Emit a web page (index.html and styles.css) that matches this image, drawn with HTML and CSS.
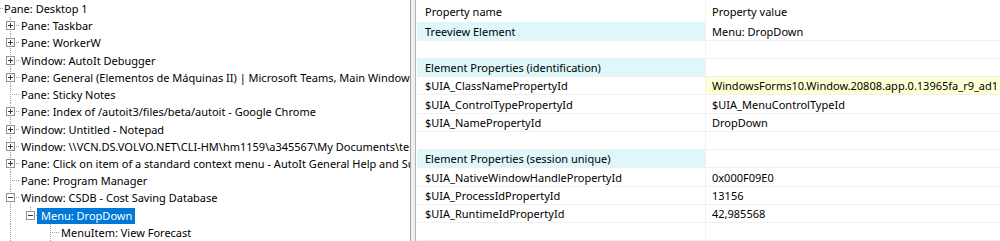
FILE: index.html
```html
<!DOCTYPE html>
<html>
<head>
<meta charset="utf-8">
<link rel="stylesheet" href="styles.css">
</head>
<body>
<div class="app">
  <div class="tree">
    <div class="row"><span class="stub"></span><span class="label">Pane: Desktop 1</span></div>
    <div class="row"><span class="g t"><i class="box plus"></i></span><span class="label">Pane: Taskbar</span></div>
    <div class="row"><span class="g t"><i class="box plus"></i></span><span class="label">Pane: WorkerW</span></div>
    <div class="row"><span class="g t"><i class="box plus"></i></span><span class="label">Window: AutoIt Debugger</span></div>
    <div class="row"><span class="g t"><i class="box plus"></i></span><span class="label">Pane: General (Elementos de Máquinas II) | Microsoft Teams, Main Window</span></div>
    <div class="row"><span class="g t"></span><span class="label">Pane: Sticky Notes</span></div>
    <div class="row"><span class="g t"><i class="box plus"></i></span><span class="label">Pane: Index of /autoit3/files/beta/autoit - Google Chrome</span></div>
    <div class="row"><span class="g t"><i class="box plus"></i></span><span class="label">Window: Untitled - Notepad</span></div>
    <div class="row"><span class="g t"><i class="box plus"></i></span><span class="label">Window: \\VCN.DS.VOLVO.NET\CLI-HM\hm1159\a345567\My Documents\temp</span></div>
    <div class="row"><span class="g t"><i class="box plus"></i></span><span class="label">Pane: Click on item of a standard context menu - AutoIt General Help and Support</span></div>
    <div class="row"><span class="g t"></span><span class="label">Pane: Program Manager</span></div>
    <div class="row"><span class="g t"><i class="box minus"></i></span><span class="label">Window: CSDB - Cost Saving Database</span></div>
    <div class="row"><span class="g v"></span><span class="g l"><i class="box minus"></i></span><span class="label selected">Menu: DropDown</span></div>
    <div class="row"><span class="g v"></span><span class="g e"></span><span class="g t"></span><span class="label">MenuItem: View Forecast</span></div>
  </div>
  <div class="splitter"></div>
  <div class="list">
    <div class="hdr"><div class="c1">Property name</div><div class="c2">Property value</div></div>
    <div class="lrow"><div class="c1 cyan">Treeview Element</div><div class="c2">Menu: DropDown</div></div>
    <div class="lrow"><div class="c1"></div><div class="c2"></div></div>
    <div class="lrow"><div class="c1 cyan">Element Properties (identification)</div><div class="c2"></div></div>
    <div class="lrow"><div class="c1">$UIA_ClassNamePropertyId</div><div class="c2 yellow">WindowsForms10.Window.20808.app.0.13965fa_r9_ad1</div></div>
    <div class="lrow"><div class="c1">$UIA_ControlTypePropertyId</div><div class="c2">$UIA_MenuControlTypeId</div></div>
    <div class="lrow"><div class="c1">$UIA_NamePropertyId</div><div class="c2">DropDown</div></div>
    <div class="lrow"><div class="c1"></div><div class="c2"></div></div>
    <div class="lrow"><div class="c1 cyan">Element Properties (session unique)</div><div class="c2"></div></div>
    <div class="lrow"><div class="c1">$UIA_NativeWindowHandlePropertyId</div><div class="c2">0x000F09E0</div></div>
    <div class="lrow"><div class="c1">$UIA_ProcessIdPropertyId</div><div class="c2">13156</div></div>
    <div class="lrow"><div class="c1">$UIA_RuntimeIdPropertyId</div><div class="c2">42,985568</div></div>
    <div class="lrow"><div class="c1"></div><div class="c2"></div></div>
  </div>
</div>
</body>
</html>
```
FILE: styles.css
```css
html, body {
  margin: 0;
  padding: 0;
  background: #fff;
  overflow: hidden;
}
.app {
  display: flex;
  width: 1000px;
  height: 241px;
  font-family: "Noto Sans", "Open Sans", sans-serif;
  font-size: 11px;
  color: #000;
  overflow: hidden;
}
.tree {
  width: 410px;
  flex: none;
  overflow: hidden;
  background: #fff;
}
.row {
  display: flex;
  height: 17.23px;
  white-space: nowrap;
}
.stub {
  width: 4px;
  flex: none;
  background: repeating-linear-gradient(to right, #a0a0a0 0 1px, transparent 1px 2px) 0 8px / 4px 1px no-repeat;
}
.g {
  width: 20px;
  flex: none;
  background-repeat: no-repeat;
}
.t {
  background-image:
    repeating-linear-gradient(to bottom, #a0a0a0 0 1px, transparent 1px 2px),
    repeating-linear-gradient(to right, #a0a0a0 0 1px, transparent 1px 2px);
  background-size: 1px 100%, 10px 1px;
  background-position: 10px 0, 10px 8px;
}
.l {
  background-image:
    repeating-linear-gradient(to bottom, #a0a0a0 0 1px, transparent 1px 2px),
    repeating-linear-gradient(to right, #a0a0a0 0 1px, transparent 1px 2px);
  background-size: 1px 9px, 10px 1px;
  background-position: 10px 0, 10px 8px;
}
.v {
  background-image: repeating-linear-gradient(to bottom, #a0a0a0 0 1px, transparent 1px 2px);
  background-size: 1px 100%;
  background-position: 10px 0;
}
.box {
  display: block;
  width: 9px;
  height: 9px;
  box-sizing: border-box;
  margin: 4px 0 0 6px;
  border: 1px solid #919191;
  background-color: #fff;
  background-repeat: no-repeat;
}
.plus {
  background-image: linear-gradient(#3a3a3a, #3a3a3a), linear-gradient(#3a3a3a, #3a3a3a);
  background-size: 5px 1px, 1px 5px;
  background-position: 1px 3px, 3px 1px;
}
.minus {
  background-image: linear-gradient(#3a3a3a, #3a3a3a);
  background-size: 5px 1px;
  background-position: 1px 3px;
}
.label {
  margin-left: -3px;
  padding: 0 3px 0 4px;
  line-height: 16px;
  height: 16px;
  margin-top: 1px;
}
.row:first-child .label {
  margin-left: 0;
  padding-left: 0;
}
.selected {
  background: #0078d7;
  color: #fff;
}
.splitter {
  width: 4px;
  flex: none;
  background: #f0f0f0;
  border-left: 1px solid #a0a0a0;
  border-right: 1px solid #b4b4b4;
}
.list {
  flex: 1;
  padding-left: 1px;
  background: #fff;
}
.hdr, .lrow {
  display: flex;
  white-space: nowrap;
}
.hdr {
  height: 22.4px;
  align-items: stretch;
}
.lrow {
  height: 18.26px;
  box-sizing: border-box;
  border-bottom: 1px solid #f0f0f0;
}
.c1 {
  width: 289px;
  flex: none;
  box-sizing: border-box;
  padding-left: 8px;
  border-right: 1px solid #f0f0f0;
  display: flex;
  align-items: center;
  overflow: hidden;
}
.c2 {
  flex: 1;
  padding-left: 6px;
  display: flex;
  align-items: center;
  overflow: hidden;
}
.cyan {
  background: #ddf7fb;
}
.yellow {
  background: #ffffd4;
}
```
